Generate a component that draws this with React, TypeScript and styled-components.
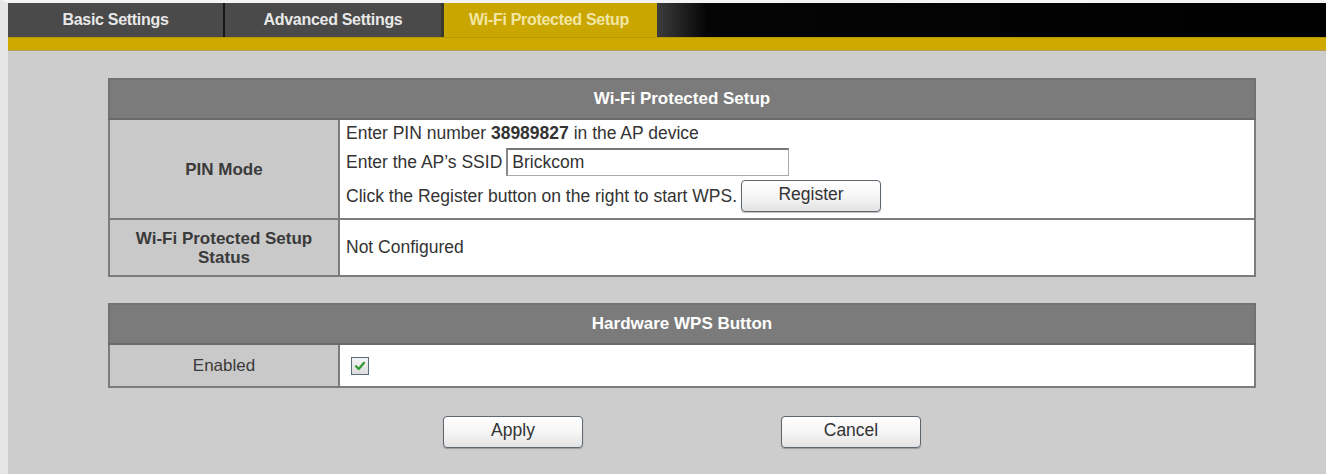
import * as React from "react";
import styled, { createGlobalStyle } from "styled-components";

const GlobalStyle = createGlobalStyle`
  html, body {
    margin: 0;
    padding: 0;
    background: #cdcdcd;
  }
  body {
    font-family: "Liberation Sans", Arial, sans-serif;
    color: #333;
  }
`;

const tabs = ["Basic Settings", "Advanced Settings", "Wi-Fi Protected Setup"];

const App: React.FunctionComponent = () => {
  const [active] = React.useState(2);
  const [ssid, setSsid] = React.useState("Brickcom");
  const [enabled, setEnabled] = React.useState(true);

  return (
    <Page>
      <GlobalStyle />
      <TopBar>
        <TabRow>
          {tabs.map((t, i) => (
            <Tab key={t} active={i === active} divider={i === 0}>
              {t}
            </Tab>
          ))}
          <TabFiller />
        </TabRow>
        <YellowStrip />
      </TopBar>

      <Content>
        <Table>
          <tbody>
            <tr>
              <HeadCell colSpan={2}>Wi-Fi Protected Setup</HeadCell>
            </tr>
            <tr>
              <LabelCell bold>PIN Mode</LabelCell>
              <ValueCell>
                <PinStack>
                  <Line>
                    Enter PIN number <b>38989827</b> in the AP device
                  </Line>
                  <InlineRow>
                    Enter the AP’s SSID
                    <TextInput
                      value={ssid}
                      onChange={(e) => setSsid(e.target.value)}
                    />
                  </InlineRow>
                  <InlineRow>
                    Click the Register button on the right to start WPS.
                    <Button>Register</Button>
                  </InlineRow>
                </PinStack>
              </ValueCell>
            </tr>
            <tr>
              <LabelCell bold height={55}>
                Wi-Fi Protected Setup
                <br />
                Status
              </LabelCell>
              <ValueCell>Not Configured</ValueCell>
            </tr>
          </tbody>
        </Table>

        <Table>
          <tbody>
            <tr>
              <HeadCell colSpan={2}>Hardware WPS Button</HeadCell>
            </tr>
            <tr>
              <LabelCell height={41}>Enabled</LabelCell>
              <ValueCell>
                <CheckBox
                  checked={enabled}
                  onClick={() => setEnabled(!enabled)}
                >
                  {enabled && (
                    <svg width="12" height="12" viewBox="0 0 12 12">
                      <path
                        d="M2 6.2 L4.8 9 L10 2.8"
                        fill="none"
                        stroke="#2f9a2f"
                        strokeWidth="2.2"
                        strokeLinecap="round"
                        strokeLinejoin="round"
                      />
                    </svg>
                  )}
                </CheckBox>
              </ValueCell>
            </tr>
          </tbody>
        </Table>

        <ButtonBar>
          <Button>Apply</Button>
          <Button>Cancel</Button>
        </ButtonBar>
      </Content>
    </Page>
  );
};

export default App;

const Page = styled.div`
  min-height: 474px;
  background: #cdcdcd;
  border-top: 3px solid #f4f4f4;
  border-left: 8px solid #e6e6e6;
`;

const TopBar = styled.div`
  display: flex;
  flex-direction: column;
`;

const TabRow = styled.div`
  display: flex;
  height: 34px;
  background: #000;
`;

const Tab = styled.div<{ active?: boolean; divider?: boolean }>`
  width: ${(p) => (p.divider ? 215 : 216)}px;
  display: flex;
  align-items: center;
  justify-content: center;
  font-size: 16px;
  font-weight: bold;
  letter-spacing: -0.3px;
  color: ${(p) => (p.active ? "#f2e6a6" : "#e8e8e8")};
  background: ${(p) => (p.active ? "#c9a700" : "#4a4a4a")};
  border-right: ${(p) => (p.divider ? "2px solid #141414" : "none")};
  box-shadow: ${(p) => (p.active ? "inset 3px 0 0 #3a3a2a" : "none")};
`;

const TabFiller = styled.div`
  flex: 1;
  background: linear-gradient(to right, #3c3c3c 0, #050505 50px, #000 100%);
`;

const YellowStrip = styled.div`
  height: 12px;
  background: #d0a900;
  border-top: 1px solid #b99500;
  border-bottom: 1px solid #b4a25a;
`;

const Content = styled.div`
  padding: 27px 0 0 100px;
  display: flex;
  flex-direction: column;
  align-items: flex-start;
`;

const Table = styled.table`
  width: 1148px;
  border-collapse: collapse;
  border: 2px solid #727272;
  margin-bottom: 26px;
  font-size: 17.5px;
`;

const HeadCell = styled.td`
  height: 38px;
  padding: 0;
  background: #7b7b7b;
  color: #fff;
  font-weight: bold;
  font-size: 17px;
  text-align: center;
  border-bottom: 2px solid #6a6a6a;
`;

const LabelCell = styled.td<{ bold?: boolean; height?: number }>`
  width: 220px;
  height: ${(p) => (p.height ? `${p.height}px` : "auto")};
  padding: 0 4px;
  background: #c9c9c9;
  color: #3a3a3a;
  text-align: center;
  font-size: 17px;
  font-weight: ${(p) => (p.bold ? "bold" : "normal")};
  line-height: 19px;
  border: 2px solid #7c7c7c;
`;

const ValueCell = styled.td`
  padding: 0 6px;
  background: #fff;
  color: #333;
  border: 2px solid #7c7c7c;
`;

const PinStack = styled.div`
  display: flex;
  flex-direction: column;
  gap: 4px;
  padding: 2px 0 6px;
`;

const Line = styled.div`
  line-height: 22px;
  b {
    font-weight: bold;
  }
`;

const InlineRow = styled.div`
  display: flex;
  align-items: center;
  gap: 4px;
`;

const TextInput = styled.input`
  width: 272px;
  height: 25px;
  padding: 0 4px;
  font: 17.5px "Liberation Sans", Arial, sans-serif;
  color: #333;
  border: 1px solid #aaa;
  border-top: 2px solid #777;
  border-left: 2px solid #888;
  background: #fff;
  outline: none;
`;

const Button = styled.button`
  width: 140px;
  height: 32px;
  padding: 0 0 3px;
  font: 17.5px "Liberation Sans", Arial, sans-serif;
  color: #333;
  background: linear-gradient(to bottom, #ffffff 0%, #f4f4f4 55%, #e2e2e2 100%);
  border: 1px solid #5e6670;
  border-radius: 4px;
  box-shadow: 0 1px 1px rgba(0, 0, 0, 0.25);
  cursor: pointer;
`;

const ButtonBar = styled.div`
  display: flex;
  gap: 198px;
  padding-left: 335px;
  margin-top: 2px;
`;

const CheckBox = styled.div<{ checked: boolean }>`
  width: 16px;
  height: 16px;
  margin-left: 5px;
  display: flex;
  align-items: center;
  justify-content: center;
  border: 1px solid #5a6a78;
  background: linear-gradient(to bottom, #f4f4f4, #dcdcdc);
  cursor: pointer;
`;
